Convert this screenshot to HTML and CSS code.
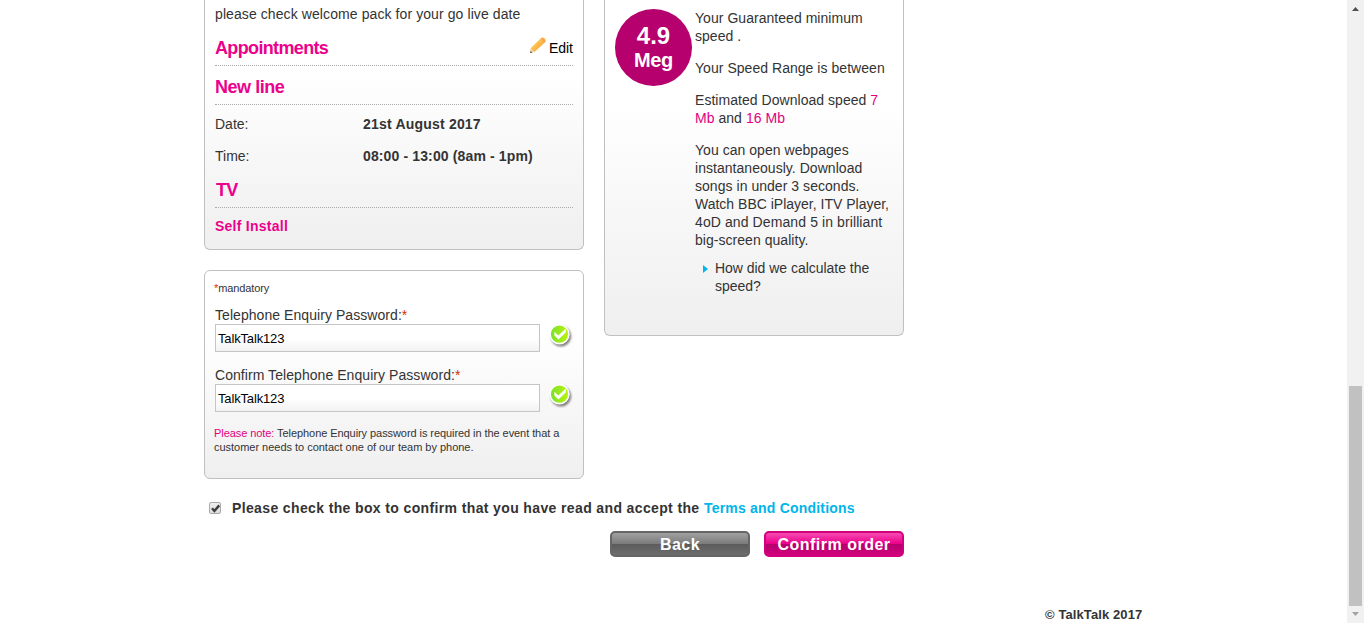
FILE: index.html
```
<!DOCTYPE html>
<html lang="en">
<head>
<meta charset="utf-8">
<title>Confirm order</title>
<link rel="stylesheet" href="styles.css">
</head>
<body>
<svg class="defs" width="0" height="0" aria-hidden="true">
  <defs>
    <linearGradient id="lime" x1="0" y1="0" x2="1" y2="0"><stop offset="0" stop-color="#7be02c"/><stop offset="1" stop-color="#b9f40c"/></linearGradient>
    <filter id="soft" x="-30%" y="-30%" width="160%" height="160%"><feGaussianBlur stdDeviation="1"/></filter>
    <linearGradient id="wood" x1="0" y1="0" x2="1" y2="1"><stop offset="0.2" stop-color="#ffd36b"/><stop offset="0.6" stop-color="#fbb040"/><stop offset="0.9" stop-color="#e8862a"/></linearGradient>
    <symbol id="tick" viewBox="0 0 24 24">
      <circle cx="12" cy="12.2" r="10.2" fill="#555" opacity=".75" filter="url(#soft)"/>
      <circle cx="10.5" cy="10.2" r="10.2" fill="#fff"/>
      <circle cx="10.5" cy="10.2" r="8.6" fill="url(#lime)"/>
      <path d="M5.4 7.8 L9.4 11.4 L16.8 4.6 L16.8 8.4 L9.4 15.6 L5.4 11.6 Z" fill="#fff"/>
    </symbol>
  </defs>
</svg>
<div class="page">
  <main class="main">
    <div class="order">
      <div class="columns">
        <div class="left">
          <section class="card card-appointments">
            <p class="live">please check welcome pack for your go live date</p>
            <div class="heading heading-first"><h2>Appointments</h2>
              <a class="edit"><svg width="16" height="17" viewBox="0 0 16 17"><path d="M.8 11 L10.8 1.2 Q13 -.4 15 1.8 Q16.2 3.6 15 5.2 L5 14.6 L.2 16 Z" fill="url(#wood)"/><path d="M.9 11.6 L4.6 14.6 L.2 16 Z" fill="#ecd0b4"/><path d="M.4 14.2 L2.3 15.5 L.2 16 Z" fill="#333"/><path d="M11.6 1 L15 4.6" stroke="#ef9b5b" stroke-width="1.2"/></svg><span>Edit</span></a>
            </div>
            <div class="heading heading-line"><h2>New line</h2></div>
            <dl class="slot">
              <dt>Date:</dt><dd>21st August 2017</dd>
              <dt>Time:</dt><dd>08:00 - 13:00 (8am - 1pm)</dd>
            </dl>
            <div class="heading heading-tv"><h2>TV</h2></div>
            <p class="install">Self Install</p>
          </section>
          <section class="card card-password">
            <p class="mandatory"><span class="star">*</span>mandatory</p>
            <label class="label">Telephone Enquiry Password:<span class="star">*</span></label>
            <div class="field"><div class="input">TalkTalk123</div><svg width="24" height="24"><use href="#tick"/></svg></div>
            <label class="label label-confirm">Confirm Telephone Enquiry Password:<span class="star">*</span></label>
            <div class="field"><div class="input">TalkTalk123</div><svg width="24" height="24"><use href="#tick"/></svg></div>
            <p class="note"><span class="pink">Please note:</span> Telephone Enquiry password is required in the event that a<br><span class="note-end">customer needs to contact one of our team by phone.</span></p>
          </section>
        </div>
        <section class="card card-speed">
          <div class="badge"><span class="badge-num">4.9</span><span class="badge-unit">Meg</span></div>
          <div class="speed-text">
            <p>Your Guaranteed minimum<br>speed .</p>
            <p>Your Speed Range is between</p>
            <p>Estimated Download speed <span class="pink">7<br>Mb</span> and <span class="pink">16 Mb</span></p>
            <p class="usage">You can open webpages<br>instantaneously. Download<br>songs in under 3 seconds.<br><span class="watch">Watch BBC iPlayer, ITV Player,</span><br><span class="demand">4oD and Demand 5 in brilliant</span><br>big-screen quality.</p>
            <div class="how"><svg width="5" height="8" viewBox="0 0 5 8"><path d="M0 0 L5 4 L0 8 Z" fill="#00b5e9"/></svg><span>How did we calculate the<br>speed?</span></div>
          </div>
        </section>
      </div>
      <div class="terms">
        <span class="checkbox"><svg width="11" height="11" viewBox="0 0 11 11"><path d="M2 5.3 L4.4 8 L9.2 2.4" fill="none" stroke="#3c3c3c" stroke-width="2.4"/></svg></span>
        <span class="terms-text">Please check the box to confirm that you have read and accept the</span>
        <a class="terms-link">Terms and Conditions</a>
      </div>
      <div class="actions"><button class="btn btn-back">Back</button><button class="btn btn-confirm">Confirm order</button></div>
    </div>
    <footer class="footer">© TalkTalk 2017</footer>
  </main>
  <div class="scrollbar">
    <svg width="7" height="4" viewBox="0 0 7 4"><path d="M0 4 L3.5 0 L7 4 Z" fill="#505050"/></svg>
    <div class="thumb"></div>
    <svg class="down" width="7" height="4" viewBox="0 0 7 4"><path d="M0 0 L3.5 4 L7 0 Z" fill="#a3a3a3"/></svg>
  </div>
</div>
</body>
</html>
```
FILE: styles.css
```
* { box-sizing: border-box; }
html, body { margin: 0; height: 623px; overflow: hidden; background: #fff; }
body { font: 14px/18px "Liberation Sans", Arial, sans-serif; color: #333; white-space: nowrap; }
p, h2, dl, dd { margin: 0; }
svg { display: block; flex: none; }
.defs { position: absolute; }
.page { display: flex; height: 623px; }
.main { flex: 1; display: flex; flex-direction: column; }
.order { width: 700px; margin-left: 204px; height: 557px; }
.columns { display: flex; gap: 20px; align-items: flex-start; height: 479px; }
.left { width: 380px; display: flex; flex-direction: column; gap: 20px; }
.card { border: 1px solid #c0c0c0; border-radius: 6px; background: linear-gradient(#fff, #efefef); }
.card-appointments { height: 250px; padding: 5px 10px 0; border-top: 0; border-radius: 0 0 6px 6px; background: linear-gradient(#fff 30%, #efefef); }
.live { letter-spacing: 0.09px; }
.heading { display: flex; justify-content: space-between; border-bottom: 1px dotted #aaa; color: #ec008c; }
.heading h2 { font-size: 18px; line-height: 20px; letter-spacing: -0.65px; }
.heading-first { height: 28px; margin-top: 15px; }
.heading-line { height: 39px; padding-top: 11px; }
.heading-line h2 { letter-spacing: -0.45px; }
.heading-tv { height: 34px; padding: 6px 0 0 1px; }
.edit { display: flex; gap: 3px; color: #000; }
.edit svg { margin-top: -1px; }
.edit span { margin-top: 1px; }
.slot { display: grid; grid-template-columns: 148px 1fr; row-gap: 14px; align-content: start; padding-top: 10px; height: 69px; }
.slot dd { font-weight: bold; letter-spacing: 0.2px; }
.slot dd:last-child { letter-spacing: 0.13px; }
.install { margin-top: 9px; font-weight: bold; color: #ec008c; letter-spacing: 0.25px; }
.card-password { height: 209px; padding: 9px 9px 0 10px; background: linear-gradient(#fff 30%, #efefef); }
.mandatory { margin-left: -1px; font-size: 11px; line-height: 16px; letter-spacing: -0.1px; }
.star { color: #d03000; }
.label { display: block; margin-top: 10px; letter-spacing: 0.06px; }
.label-confirm { margin-top: 14px; }
.field { display: flex; gap: 9px; height: 28px; }
.input { width: 325px; height: 28px; padding: 0 2px; border: 1px solid #c5c5c5; background: linear-gradient(#fff 55%, #f2f2f2); font-size: 13px; line-height: 27px; letter-spacing: -0.15px; color: #000; }
.note { margin: 14px 0 0 -1px; font-size: 11px; line-height: 14px; letter-spacing: -0.07px; }
.note-end { letter-spacing: -0.02px; }
.pink { color: #e2007f; }
.card-speed { width: 300px; height: 336px; display: flex; padding: 9px 10px 0; border-top: 0; border-radius: 0 0 6px 6px; background: linear-gradient(#fff 30%, #efefef); }
.badge { width: 77px; height: 77px; flex: none; border-radius: 50%; background: #b5006d; color: #fff; font-weight: bold; display: flex; flex-direction: column; align-items: center; padding-top: 15px; }
.badge-num { font-size: 24px; line-height: 24px; }
.badge-unit { font-size: 20px; line-height: 24px; letter-spacing: -0.3px; }
.speed-text { padding-left: 3px; letter-spacing: 0.04px; }
.watch { letter-spacing: 0; }
.demand { letter-spacing: 0.1px; }
.speed-text p { margin-bottom: 14px; }
.speed-text .usage { margin-bottom: 10px; }
.how { display: flex; gap: 7px; padding-left: 8px; letter-spacing: -0.03px; }
.how svg { margin-top: 6px; }
.terms { display: flex; align-items: center; height: 18px; margin-top: 20px; padding-left: 5px; font-weight: bold; }
.checkbox { width: 12px; height: 12px; margin-right: 11px; border: 1px solid #aaa; border-radius: 2px; background: linear-gradient(#eee, #ddd); display: flex; align-items: center; justify-content: center; }
.terms-text { width: 472px; letter-spacing: 0.37px; }
.terms-link { color: #00b5e9; letter-spacing: 0.2px; }
.actions { display: flex; justify-content: flex-end; gap: 14px; margin-top: 14px; }
.btn { width: 140px; height: 26px; padding: 1px 0 0; border-radius: 5px; color: #fff; font: bold 16px/21px "Liberation Sans", Arial, sans-serif; letter-spacing: 0.5px; }
.btn-back { border: 2px solid #666; background: linear-gradient(#a0a0a0, #7c7c7c 48%, #5c5c5c 52%, #6d6d6d); }
.btn-confirm { border: 2px solid #d2007c; background: linear-gradient(#f64bb0, #ec008c 48%, #b5006d 52%, #d2007c); }
.footer { margin: 49px 0 0 1045px; font-size: 13px; font-weight: bold; letter-spacing: 0.1px; }
.scrollbar { width: 17px; background: #f1f1f1; display: flex; flex-direction: column; align-items: center; padding-top: 7px; }
.thumb { width: 13px; height: 220px; margin-top: 375px; background: #c1c1c1; }
.down { margin-top: 6px; }
```
